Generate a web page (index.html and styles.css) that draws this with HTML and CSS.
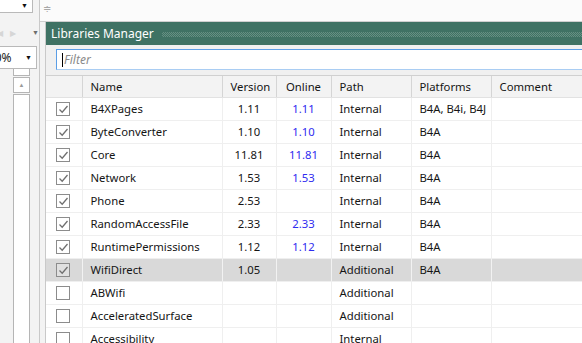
FILE: index.html
```
<!DOCTYPE html>
<html lang="en">
<head>
  <meta charset="UTF-8">
  <meta name="viewport" content="width=device-width, initial-scale=1.0">
  <title>Libraries Manager</title>
  <link rel="stylesheet" href="styles.css">
</head>
<body>
  <div class="side">
    <div class="combo small"><span class="arrow">&#9660;</span></div>
    <div class="nav">
      <span class="faint">&#9664;</span>
      <span class="faint">&#9654;</span>
      <span class="down">&#9660;</span>
    </div>
    <div class="combo zoom"><span class="val">100%</span><span class="arrow">&#9660;</span></div>
    <div class="scroll">
      <div class="thumb"></div>
      <div class="up"><span>&#9650;</span></div>
      <div class="track"></div>
    </div>
  </div>

  <div class="main">
    <div class="strip"><span class="pin">&#8785;</span></div>
    <div class="panel">
      <div class="title">
        <span>Libraries Manager</span>
        <div class="dots"></div>
      </div>
      <div class="filter-row">
        <div class="filter"><span class="caret"></span>Filter</div>
      </div>
      <div class="grid">
        <table>
          <colgroup>
            <col class="c-check">
            <col class="c-name">
            <col class="c-ver">
            <col class="c-online">
            <col class="c-path">
            <col class="c-plat">
            <col class="c-comment">
          </colgroup>
          <thead>
            <tr>
              <th></th>
              <th>Name</th>
              <th class="mid">Version</th>
              <th class="mid">Online</th>
              <th>Path</th>
              <th>Platforms</th>
              <th>Comment</th>
            </tr>
          </thead>
          <tbody id="rows"></tbody>
        </table>
      </div>
    </div>
  </div>

  <script>
    const libs = [
      ["B4XPages", "1.11", "1.11", "Internal", "B4A, B4i, B4J", true],
      ["ByteConverter", "1.10", "1.10", "Internal", "B4A", true],
      ["Core", "11.81", "11.81", "Internal", "B4A", true],
      ["Network", "1.53", "1.53", "Internal", "B4A", true],
      ["Phone", "2.53", "", "Internal", "B4A", true],
      ["RandomAccessFile", "2.33", "2.33", "Internal", "B4A", true],
      ["RuntimePermissions", "1.12", "1.12", "Internal", "B4A", true],
      ["WifiDirect", "1.05", "", "Additional", "B4A", true],
      ["ABWifi", "", "", "Additional", "", false],
      ["AcceleratedSurface", "", "", "Additional", "", false],
      ["Accessibility", "", "", "Internal", "", false]
    ];

    const tick = '<svg width="11" height="11" viewBox="0 0 11 11"><path d="M1.5 5.5 L4.2 8.2 L9.5 2" fill="none" stroke="#6f6f6f" stroke-width="1.3"/></svg>';
    const body = document.querySelector("#rows");

    libs.forEach((lib, i) => {
      const tr = document.createElement("tr");
      if (i === 7) tr.className = "selected";
      tr.innerHTML =
        `<td><span class="box">${lib[5] ? tick : ""}</span></td>` +
        `<td>${lib[0]}</td>` +
        `<td class="mid">${lib[1]}</td>` +
        `<td class="mid online">${lib[2]}</td>` +
        `<td>${lib[3]}</td>` +
        `<td>${lib[4]}</td>` +
        `<td></td>`;
      body.appendChild(tr);
    });
  </script>
</body>
</html>
```

FILE: styles.css
```
* {
  box-sizing: border-box;
}

body {
  margin: 0;
  width: 582px;
  height: 343px;
  overflow: hidden;
  display: flex;
  background-color: #f3f3f3;
  font-family: "Segoe UI", "Noto Sans", sans-serif;
  font-size: 11.3px;
  color: #151515;
}

/* left tool column */
.side {
  width: 40px;
  flex-shrink: 0;
  height: 100%;
  border-right: 1px solid #c9c9c9;
}

.combo {
  background-color: white;
  border: 1px solid #b9b9b9;
  display: flex;
  align-items: center;
  justify-content: flex-end;
  overflow: hidden;
}

.combo .arrow {
  font-size: 7px;
  color: #111;
  padding-right: 4px;
}

.combo.small {
  width: 34px;
  height: 14px;
  margin-top: -1px;
  margin-left: -1px;
  align-items: flex-start;
}

.combo.small .arrow {
  padding-top: 1px;
}

.nav {
  display: flex;
  align-items: center;
  height: 14px;
  margin-top: 12px;
  font-size: 8px;
}

.nav .faint {
  color: #d6d6d6;
  margin-left: -3px;
  width: 16px;
}

.nav .down {
  color: #6d6d6d;
  font-size: 7px;
  margin-left: 7px;
}

.combo.zoom {
  margin-top: 7px;
  margin-left: -1px;
  width: 38px;
  height: 23px;
  justify-content: space-between;
}

.combo.zoom .val {
  font-size: 12px;
  margin-left: -19px;
  color: #222;
}

.scroll {
  margin-left: 13px;
  width: 17px;
  display: flex;
  flex-direction: column;
  gap: 1px;
  height: 290px;
}

.scroll .thumb {
  height: 7px;
  border: 1px solid #b5b5b5;
  border-top: none;
  background-color: white;
}

.scroll .up {
  height: 16px;
  border: 1px solid #b5b5b5;
  background-color: white;
  display: flex;
  justify-content: center;
  align-items: center;
  font-size: 6px;
  color: #9a9a9a;
}

.scroll .track {
  flex: 1;
  border: 1px solid #b5b5b5;
  background-color: white;
}

/* main area */
.main {
  flex: 1;
  display: flex;
  flex-direction: column;
  min-width: 0;
}

.strip {
  height: 22px;
  background-color: #fbfbfb;
  border-bottom: 1px solid #cfcfcf;
  flex-shrink: 0;
}

.pin {
  display: inline-block;
  margin-left: 3px;
  margin-top: 1px;
  font-size: 10px;
  color: #a8a8a8;
}

.panel {
  flex: 1;
  margin-left: 5px;
  border-left: 1px solid #c9c9c9;
  background-color: #f0f0f0;
  display: flex;
  flex-direction: column;
  min-width: 0;
}

.title {
  height: 23px;
  background-color: #3f7264;
  color: white;
  display: flex;
  align-items: center;
  padding-left: 5px;
  font-size: 12px;
}

.dots {
  flex: 1;
  height: 5px;
  margin-left: 8px;
  margin-top: 1px;
  background: repeating-conic-gradient(#86a89d 0 25%, transparent 0 50%) 0 0 / 2px 2px;
  opacity: 0.55;
}

.filter-row {
  padding: 4px 0 5px 10px;
}

.filter {
  height: 21px;
  background-color: white;
  border: 1px solid #5b9ee6;
  border-bottom-color: #a9cdf3;
  border-right: none;
  display: flex;
  align-items: center;
  padding-left: 5px;
  font-style: italic;
  color: #8a8a8a;
  font-size: 12px;
}

.caret {
  width: 1px;
  height: 14px;
  background-color: #000;
  margin-right: 1px;
}

.grid {
  flex: 1;
  overflow: hidden;
  background-color: white;
  border-top: 1px solid #d0d0d0;
}

table {
  border-collapse: collapse;
  table-layout: fixed;
  width: 640px;
}

.c-check { width: 36px; }
.c-name { width: 140px; }
.c-ver { width: 54px; }
.c-online { width: 55px; }
.c-path { width: 80px; }
.c-plat { width: 80px; }
.c-comment { width: 195px; }

th {
  height: 21px;
  font-weight: normal;
  text-align: left;
  background-color: #f3f3f3;
  border-right: 1px solid #d5d5d5;
  border-bottom: 1px solid #e2e2e2;
  padding: 0 8px;
  white-space: nowrap;
}

td {
  height: 23px;
  padding: 0 8px;
  border-right: 1px solid #efefef;
  border-bottom: 1px solid #efefef;
  white-space: nowrap;
}

th:first-child,
td:first-child {
  text-align: center;
  padding: 0;
}

.mid {
  text-align: center;
}

.online {
  color: #2f2cf0;
}

tr.selected td {
  background-color: #d9d9d9;
  border-right-color: #f2f2f2;
}

.box {
  display: inline-flex;
  width: 14px;
  height: 14px;
  border: 1px solid #8c8c8c;
  background-color: white;
  vertical-align: middle;
  align-items: center;
  justify-content: center;
  margin-left: -1px;
}

tr.selected .box {
  background-color: #e0e0e0;
}
```
